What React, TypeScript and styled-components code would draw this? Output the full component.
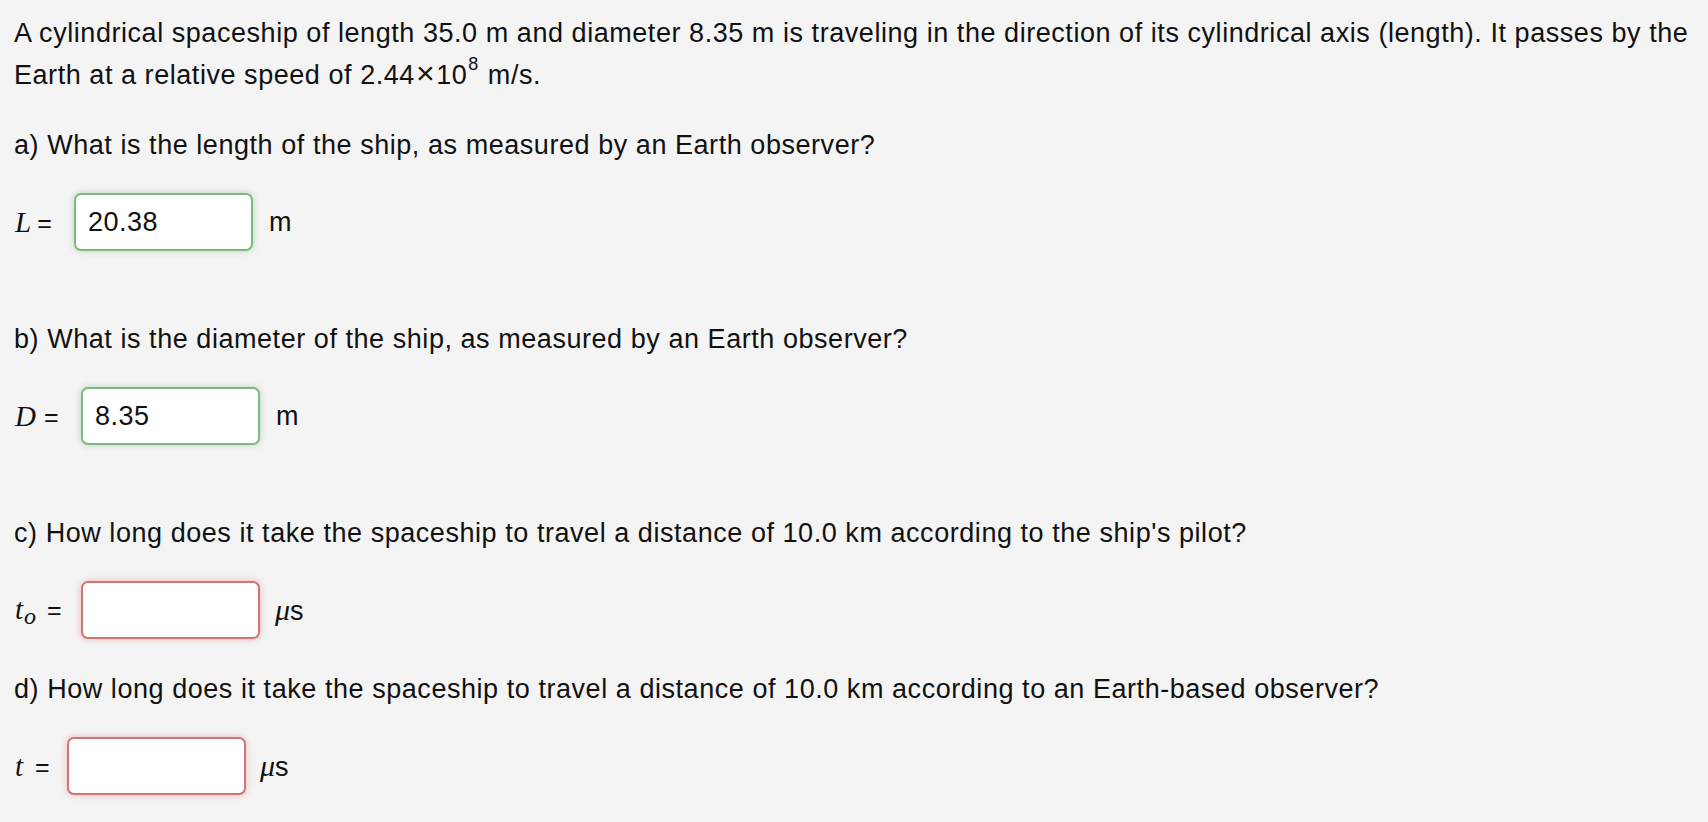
import React from "react";
import styled, { createGlobalStyle } from "styled-components";

const GlobalStyle = createGlobalStyle`
  html, body {
    margin: 0;
    background: #f4f4f4;
  }
  body {
    font-family: "Liberation Sans", Arial, sans-serif;
    color: #111;
  }
`;

const Page = styled.div`
  padding: 13px 8px 13px 14px;
  font-size: 27px;
  line-height: 40px;
  letter-spacing: 0.55px;
`;

const Intro = styled.p`
  margin: 0;
`;

const Question = styled.p`
  margin: 30px 0 0;
`;

const AnswerRow = styled.div<{ $spaced?: boolean }>`
  display: flex;
  align-items: center;
  margin: 28px 0 ${({ $spaced }) => ($spaced ? "68px" : "28px")};
  height: 58px;
  letter-spacing: 0;
`;

const Label = styled.span<{ $width: number }>`
  display: flex;
  align-items: baseline;
  width: ${({ $width }) => $width}px;
  padding-left: 1px;
  font-family: "Liberation Serif", "Times New Roman", serif;
  font-size: 29px;
  white-space: nowrap;
`;

const Var = styled.i`
  font-style: italic;
`;

const Sub = styled.i`
  font-size: 24px;
  position: relative;
  top: 5px;
  margin-left: 1px;
`;

const Eq = styled.span<{ $gap: number }>`
  margin-left: ${({ $gap }) => $gap}px;
  font-family: "Liberation Sans", Arial, sans-serif;
  font-size: 25px;
`;

const Field = styled.div<{ $state: "correct" | "wrong" }>`
  box-sizing: border-box;
  width: 179px;
  height: 58px;
  padding: 0 12px;
  display: flex;
  align-items: center;
  background: #fff;
  border-radius: 7px;
  border: 2px solid
    ${({ $state }) => ($state === "correct" ? "#7fb87f" : "#d07575")};
  box-shadow: 0 0 7px
    ${({ $state }) =>
      $state === "correct"
        ? "rgba(110, 180, 110, 0.45)"
        : "rgba(220, 110, 110, 0.45)"};
  font-size: 27px;
  letter-spacing: 0.5px;
`;

const Unit = styled.span<{ $gap: number }>`
  margin-left: ${({ $gap }) => $gap}px;
  font-size: 27px;
`;

const Mu = styled.i`
  font-family: "Liberation Serif", "Times New Roman", serif;
  font-size: 30px;
`;

const Times = styled.span`
  font-size: 32px;
  margin: 0 1px;
`;

const Sup = styled.span`
  display: inline-block;
  font-size: 18px;
  line-height: 18px;
  vertical-align: 14px;
  margin: 0 9px 0 1px;
`;

export default function App() {
  return (
    <>
      <GlobalStyle />
      <Page>
        <Intro>
          A cylindrical spaceship of length 35.0 m and diameter 8.35 m is
          traveling in the direction of its cylindrical axis (length). It
          passes by the Earth at a relative speed of 2.44<Times>×</Times>10
          <Sup>8</Sup>m/s.
        </Intro>

        <Question>
          a) What is the length of the ship, as measured by an Earth observer?
        </Question>
        <AnswerRow $spaced>
          <Label $width={59}>
            <Var>L</Var>
            <Eq $gap={6}>=</Eq>
          </Label>
          <Field $state="correct">20.38</Field>
          <Unit $gap={16}>m</Unit>
        </AnswerRow>

        <Question>
          b) What is the diameter of the ship, as measured by an Earth
          observer?
        </Question>
        <AnswerRow $spaced>
          <Label $width={66}>
            <Var>D</Var>
            <Eq $gap={8}>=</Eq>
          </Label>
          <Field $state="correct">8.35</Field>
          <Unit $gap={16}>m</Unit>
        </AnswerRow>

        <Question>
          c) How long does it take the spaceship to travel a distance of 10.0
          km according to the ship's pilot?
        </Question>
        <AnswerRow>
          <Label $width={66}>
            <Var>t</Var>
            <Sub>o</Sub>
            <Eq $gap={11}>=</Eq>
          </Label>
          <Field $state="wrong" />
          <Unit $gap={15}>
            <Mu>μ</Mu>s
          </Unit>
        </AnswerRow>

        <Question>
          d) How long does it take the spaceship to travel a distance of 10.0
          km according to an Earth-based observer?
        </Question>
        <AnswerRow>
          <Label $width={52}>
            <Var>t</Var>
            <Eq $gap={12}>=</Eq>
          </Label>
          <Field $state="wrong" />
          <Unit $gap={14}>
            <Mu>μ</Mu>s
          </Unit>
        </AnswerRow>
      </Page>
    </>
  );
}
